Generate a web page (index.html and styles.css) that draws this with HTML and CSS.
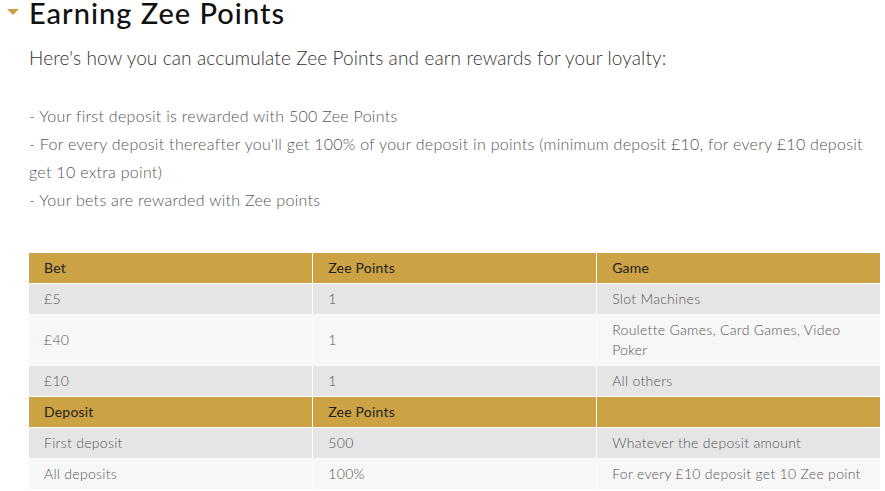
FILE: index.html
```html
<!DOCTYPE html>
<html lang="en">
<head>
<meta charset="utf-8">
<title>Earning Zee Points</title>
<link rel="stylesheet" href="styles.css">
</head>
<body>
<section class="section">
  <h2 class="title"><span class="caret"></span>Earning Zee Points</h2>
  <p class="intro">Here's how you can accumulate Zee Points and earn rewards for your loyalty:</p>
  <p class="list">- Your first deposit is rewarded with 500 Zee Points<br>- For every deposit thereafter you'll get 100% of your deposit in points (minimum deposit £10, for every £10 deposit get 10 extra point)<br>- Your bets are rewarded with Zee points</p>
  <table class="points">
    <tr class="head"><td>Bet</td><td>Zee Points</td><td>Game</td></tr>
    <tr class="odd"><td>£5</td><td>1</td><td>Slot Machines</td></tr>
    <tr class="even"><td>£40</td><td>1</td><td>Roulette Games, Card Games, Video Poker</td></tr>
    <tr class="odd"><td>£10</td><td>1</td><td>All others</td></tr>
    <tr class="head"><td>Deposit</td><td>Zee Points</td><td></td></tr>
    <tr class="odd"><td>First deposit</td><td>500</td><td>Whatever the deposit amount</td></tr>
    <tr class="even"><td>All deposits</td><td>100%</td><td>For every £10 deposit get 10 Zee point</td></tr>
  </table>
</section>
</body>
</html>
```
FILE: styles.css
```css
html, body {
  margin: 0;
  padding: 0;
  background: #fff;
}
body {
  font-family: "Lato", "Open Sans", sans-serif;
  color: #444;
}
.section {
  padding: 0 4px 0 29px;
}
.title {
  position: relative;
  margin: 0;
  font-size: 29px;
  line-height: 26px;
  font-weight: 500;
  letter-spacing: 1px;
  color: #111;
}
.caret {
  position: absolute;
  left: -22px;
  top: 9px;
  width: 0;
  height: 0;
  border-left: 6px solid transparent;
  border-right: 6px solid transparent;
  border-top: 6px solid #c9a046;
}
.intro {
  margin: 18px 0 0 0;
  font-size: 19px;
  line-height: 28px;
  letter-spacing: 0.12px;
  color: #333;
  font-weight: 300;
}
.list {
  margin: 30px 0 0 0;
  font-size: 16px;
  line-height: 28px;
  letter-spacing: 0.29px;
  color: #555;
  font-weight: 300;
}
.points {
  margin-top: 38px;
  width: 852px;
  border-collapse: collapse;
  table-layout: fixed;
  font-size: 14px;
}
.points td {
  border: 1px solid #fff;
  padding: 5px 15px;
  line-height: 20px;
  letter-spacing: 0.3px;
  vertical-align: middle;
  font-weight: 300;
  color: #555;
}
.points tr.head td {
  background: #cba244;
  color: #1e1e1e;
  font-weight: 400;
  letter-spacing: 0.2px;
}
.points tr.odd td {
  background: #e5e5e5;
}
.points tr.even td {
  background: #f7f7f7;
}
.points tr td:first-child {
  border-left: 0;
}
```
